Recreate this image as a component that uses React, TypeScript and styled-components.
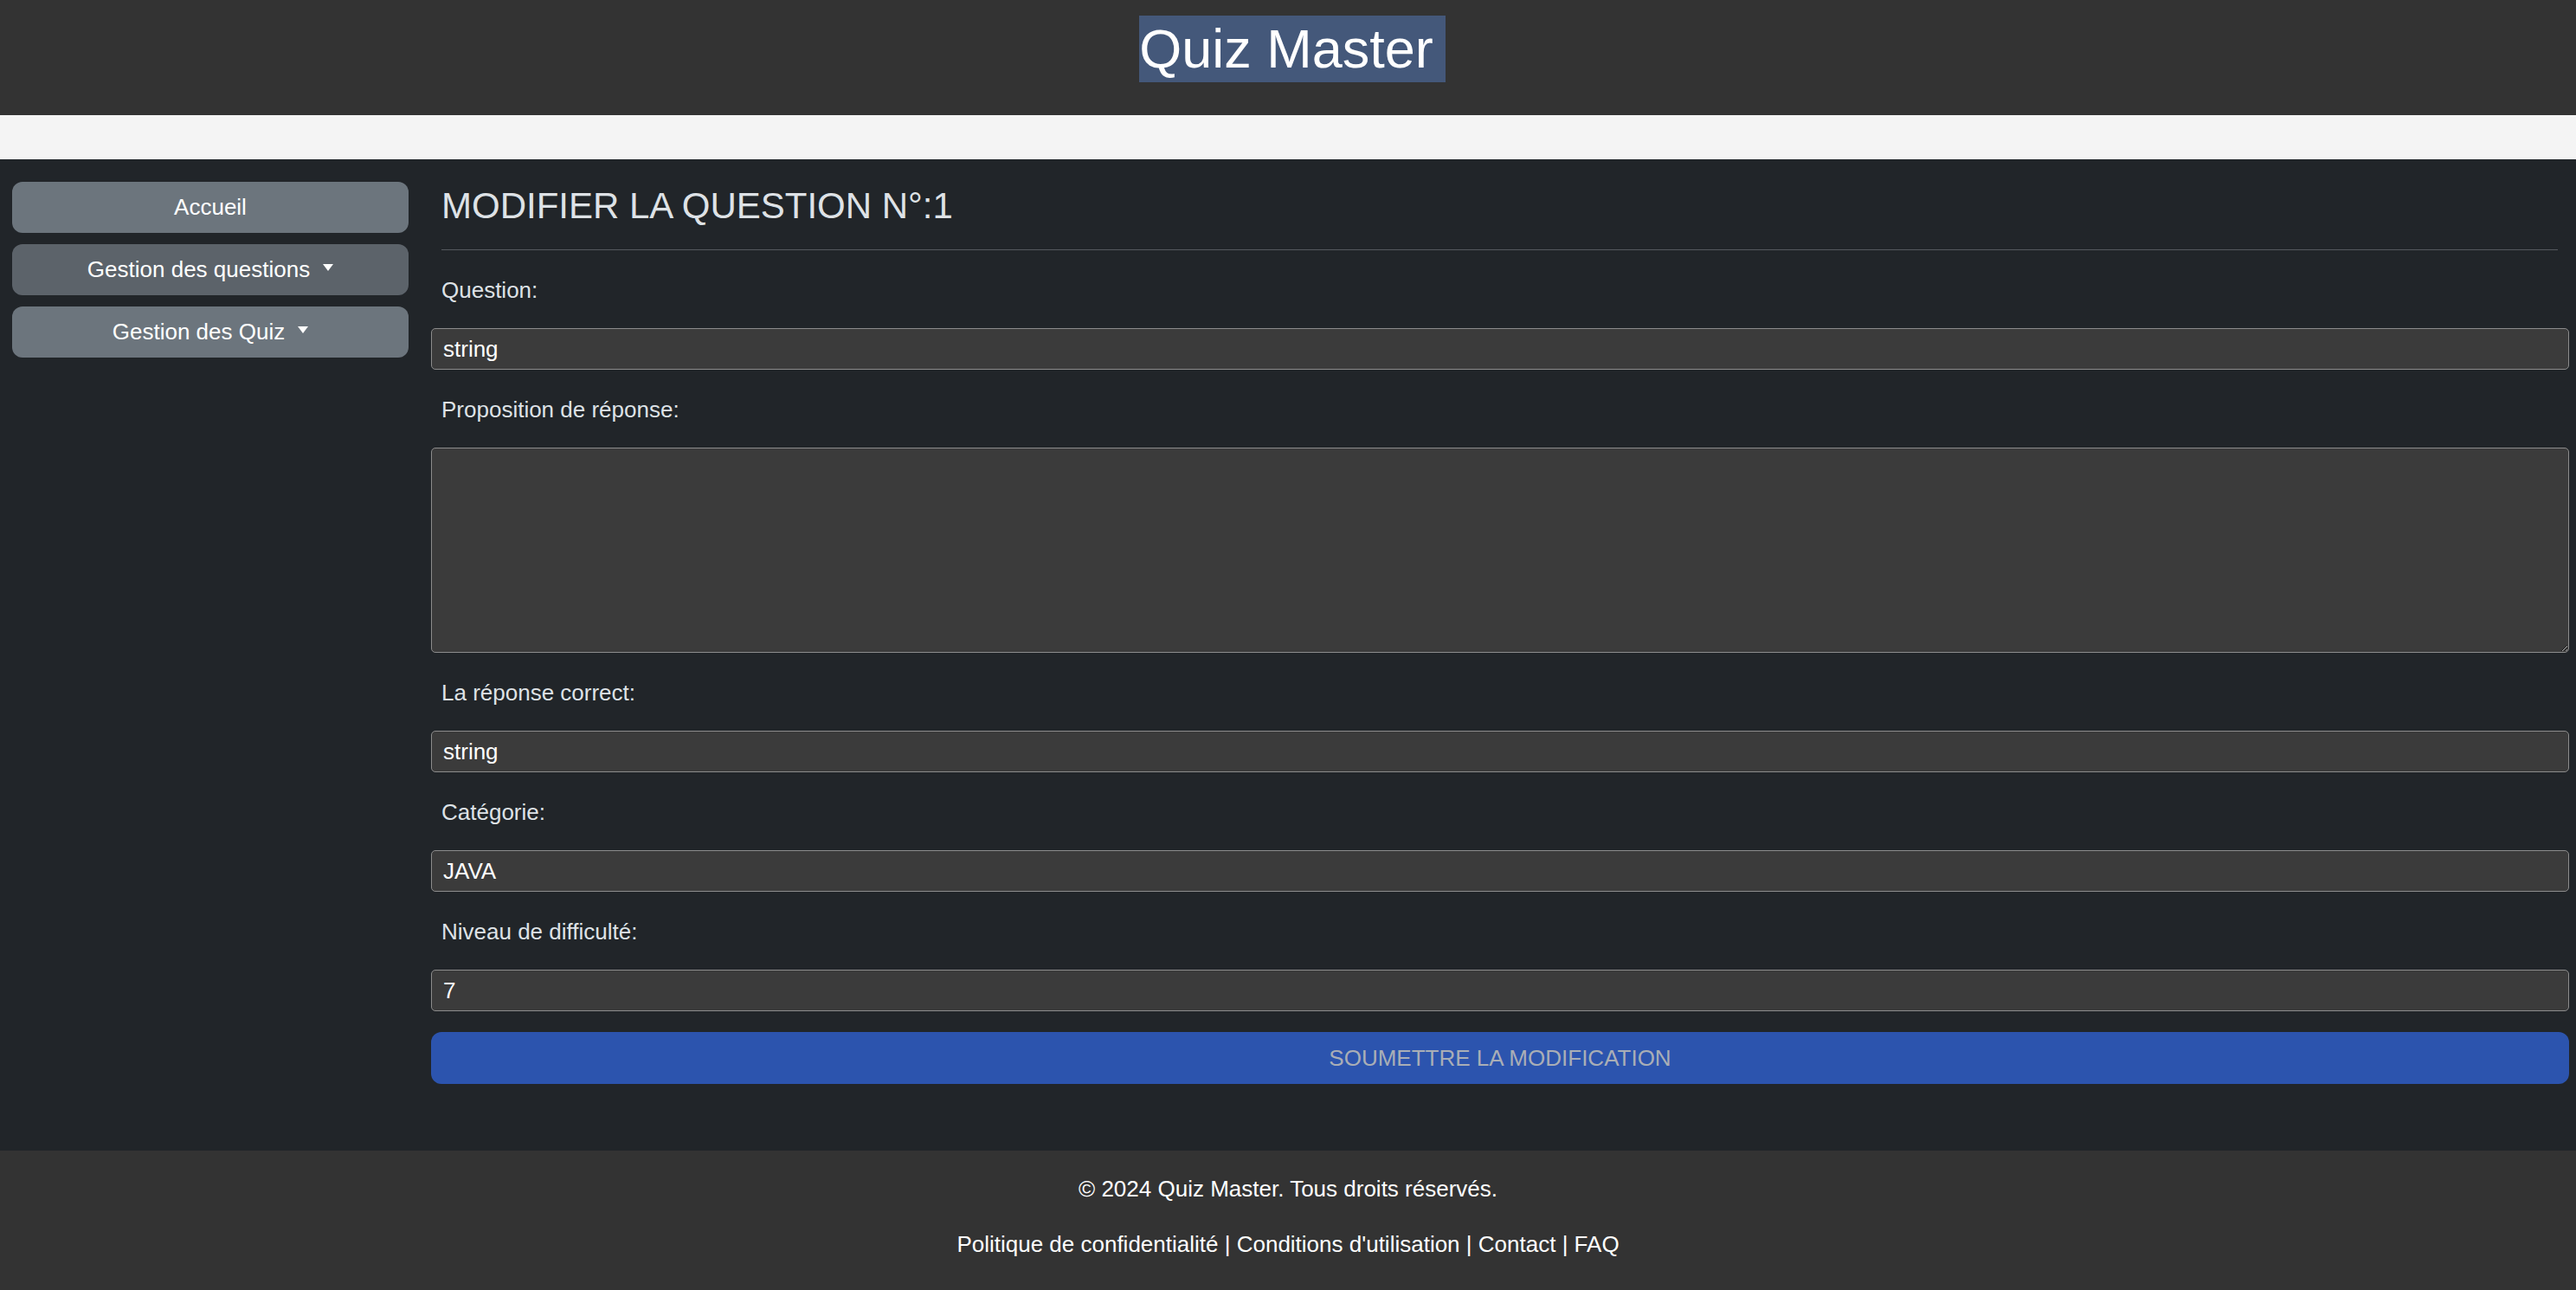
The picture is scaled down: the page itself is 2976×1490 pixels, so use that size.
import React from "react";
import styled, { createGlobalStyle } from "styled-components";

const GlobalStyle = createGlobalStyle`
  html, body {
    margin: 0;
    padding: 0;
    background: #212529;
  }
  body {
    font-family: "Liberation Sans", Arial, Helvetica, sans-serif;
    color: #dee2e6;
  }
  * { box-sizing: border-box; }
`;

const Page = styled.div`
  display: flex;
  flex-direction: column;
  min-height: 1490px;
  background: #212529;
`;

const Header = styled.header`
  background: #333333;
  padding: 18px 0 38px;
  text-align: center;
`;

const SiteTitle = styled.h1`
  margin: 0;
  font-size: 63px;
  line-height: 77px;
  font-weight: 400;
  color: #ffffff;
`;

const Highlight = styled.span`
  display: inline-block;
  background: #44587a;
  padding: 0 14px 0 0;
  margin-left: 10px;
`;

const NavStrip = styled.nav`
  height: 51px;
  background: #f4f4f4;
`;

const Body = styled.div`
  flex: 1;
  display: flex;
  gap: 26px;
  padding: 26px 8px 76px 14px;
  background: #212529;
`;

const Sidebar = styled.aside`
  width: 458px;
  flex-shrink: 0;
  display: flex;
  flex-direction: column;
  gap: 13px;
`;

const SideButton = styled.button<{ $active?: boolean; $caret?: boolean }>`
  height: 59px;
  border: none;
  border-radius: 12px;
  background: ${(p) => (p.$active ? "#5c636a" : "#6c757d")};
  color: #ffffff;
  font-family: "Liberation Sans", Arial, sans-serif;
  font-size: 26px;
  line-height: 39px;
  text-align: center;
  cursor: pointer;
  padding: 0 16px;

  ${(p) =>
    p.$caret
      ? `&::after {
    content: "";
    display: inline-block;
    margin-left: 15px;
    vertical-align: 7px;
    border-top: 8px solid #ffffff;
    border-left: 6px solid transparent;
    border-right: 6px solid transparent;
  }`
      : ""}
`;

const Content = styled.main`
  flex: 1;
  min-width: 0;
  display: flex;
  flex-direction: column;
`;

const PageTitle = styled.h2`
  margin: 3px 0 0 12px;
  font-size: 42px;
  line-height: 50px;
  font-weight: 400;
  color: #dee2e6;
`;

const Rule = styled.hr`
  margin: 25px 13px 0 12px;
  border: none;
  border-top: 1px solid #55595e;
  height: 0;
`;

const Form = styled.form`
  display: flex;
  flex-direction: column;
  gap: 27px;
  margin-top: 27px;
`;

const Field = styled.div`
  display: flex;
  flex-direction: column;
  gap: 24px;
`;

const Label = styled.label`
  margin-left: 12px;
  font-size: 26px;
  line-height: 39px;
  color: #dee2e6;
`;

const TextInput = styled.input`
  height: 48px;
  width: 100%;
  border: 1px solid #8c8c8c;
  border-radius: 5px;
  background: #3b3b3b;
  color: #ffffff;
  font-family: "Liberation Sans", Arial, sans-serif;
  font-size: 26px;
  padding: 0 13px;
  outline: none;
`;

const TextArea = styled.textarea`
  height: 237px;
  width: 100%;
  border: 1px solid #8c8c8c;
  border-radius: 5px;
  background: #3b3b3b;
  color: #ffffff;
  font-family: "Liberation Sans", Arial, sans-serif;
  font-size: 26px;
  padding: 8px 13px;
  outline: none;
  color-scheme: dark;
  resize: both;
  display: block;
`;

const SubmitButton = styled.button`
  margin-top: -3px;
  height: 60px;
  width: 100%;
  border: none;
  border-radius: 12px;
  background: #2c54ae;
  color: #a9aeb6;
  font-family: "Liberation Sans", Arial, sans-serif;
  font-size: 26px;
  text-transform: uppercase;
  cursor: pointer;
`;

const Footer = styled.footer`
  background: #333333;
  padding: 25px 0 33px;
  display: flex;
  flex-direction: column;
  gap: 25px;
  text-align: center;
`;

const FooterLine = styled.p`
  margin: 0;
  font-size: 26px;
  line-height: 39px;
  color: #ffffff;
`;

const FooterLink = styled.a`
  color: #ffffff;
  text-decoration: none;
`;

type FieldDef = { id: string; label: string; value: string; multiline?: boolean };

const fields: FieldDef[] = [
  { id: "question", label: "Question:", value: "string" },
  { id: "propositions", label: "Proposition de réponse:", value: "", multiline: true },
  { id: "correct", label: "La réponse correct:", value: "string" },
  { id: "categorie", label: "Catégorie:", value: "JAVA" },
  { id: "niveau", label: "Niveau de difficulté:", value: "7" },
];

const links = ["Politique de confidentialité", "Conditions d'utilisation", "Contact", "FAQ"];

export default function App() {
  return (
    <>
      <GlobalStyle />
      <Page>
        <Header>
          <SiteTitle>
            <Highlight>Quiz Master</Highlight>
          </SiteTitle>
        </Header>
        <NavStrip />
        <Body>
          <Sidebar>
            <SideButton type="button">Accueil</SideButton>
            <SideButton type="button" $active $caret>
              Gestion des questions
            </SideButton>
            <SideButton type="button" $caret>
              Gestion des Quiz
            </SideButton>
          </Sidebar>
          <Content>
            <PageTitle>MODIFIER LA QUESTION N°:1</PageTitle>
            <Rule />
            <Form onSubmit={(e) => e.preventDefault()}>
              {fields.map((f) => (
                <Field key={f.id}>
                  <Label htmlFor={f.id}>{f.label}</Label>
                  {f.multiline ? (
                    <TextArea id={f.id} defaultValue={f.value} />
                  ) : (
                    <TextInput id={f.id} type="text" defaultValue={f.value} />
                  )}
                </Field>
              ))}
              <SubmitButton type="submit">Soumettre la modification</SubmitButton>
            </Form>
          </Content>
        </Body>
        <Footer>
          <FooterLine>© 2024 Quiz Master. Tous droits réservés.</FooterLine>
          <FooterLine>
            {links.map((l, i) => (
              <React.Fragment key={l}>
                {i > 0 ? " | " : ""}
                <FooterLink href="#">{l}</FooterLink>
              </React.Fragment>
            ))}
          </FooterLine>
        </Footer>
      </Page>
    </>
  );
}
